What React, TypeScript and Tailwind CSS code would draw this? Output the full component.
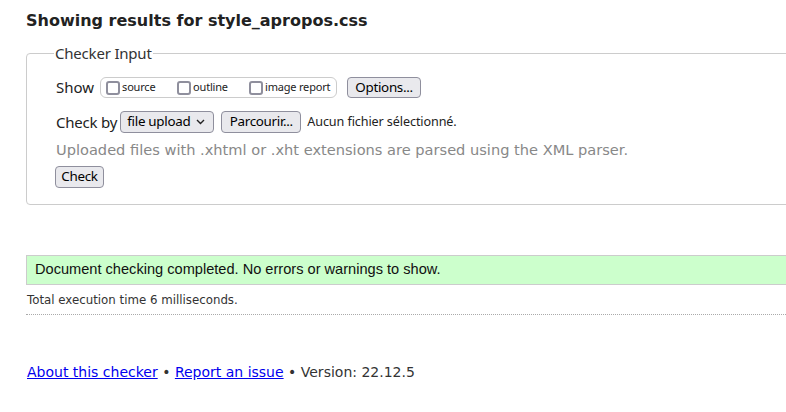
import React from "react";

const ui = "font-['Noto_Sans','Open_Sans',sans-serif]";
const dv = "font-['DejaVu_Sans',sans-serif]";
const btn =
  "h-[21px] px-[5px] rounded-[4px] border border-[#8f8f9d] bg-[#e9e9ed] text-[13.4px] leading-none text-black tracking-[-0.3px] whitespace-nowrap";

const Box = () => (
  <span className="inline-block w-[14px] h-[14px] rounded-[3px] border-[2px] border-[#8f8f9d] bg-white mr-[2px]" />
);

const App = () => {
  return (
    <div className={`w-full h-[412px] overflow-hidden bg-white ${dv} text-[#222]`}>
      <div className="w-[820px] pl-[26px]">
        <h2 className="pt-[11px] text-[16px] font-bold leading-[20px] text-[#222]">
          Showing results for style_apropos.css
        </h2>

        <fieldset className={`mt-[13px] h-[161px] border border-[#ccc] rounded-[4px] pl-[29px] ${ui}`}>
          <legend className="ml-[-2px] px-[1px] text-[15px] text-[#333] leading-[18px] tracking-[-0.2px]">
            Checker Input
          </legend>

          <div className="flex items-center mt-[15px] h-[21px]">
            <span className="text-[15px] text-[#222] mr-[6px]">Show</span>
            <div className="flex items-center h-[21px] w-[237px] border border-[#ccc] rounded-[6px] pl-[5px] text-[11px] text-[#222] tracking-[-0.2px]">
              <label className="flex items-center w-[71px]">
                <Box />
                source
              </label>
              <label className="flex items-center w-[72px]">
                <Box />
                outline
              </label>
              <label className="flex items-center">
                <Box />
                image report
              </label>
            </div>
            <button className={`${btn} ml-[10px] w-[74px]`}>Options...</button>
          </div>

          <div className="flex items-center mt-[13px] h-[22px]">
            <span className="text-[15px] text-[#222] mr-[3px] tracking-[-0.2px]">Check by</span>
            <div className={`${btn} h-[22px] w-[94px] flex items-center justify-between pl-[6px] pr-[8px]`}>
              <span>file upload</span>
              <svg width="9" height="6" viewBox="0 0 9 6">
                <path d="M1 1l3.5 3.5L8 1" stroke="#222" strokeWidth="1.4" fill="none" />
              </svg>
            </div>
            <button className={`${btn} h-[22px] ml-[7px] w-[80px]`}>Parcourir...</button>
            <span className="ml-[6px] text-[12.6px] text-[#222] tracking-[-0.1px]">Aucun fichier sélectionné.</span>
          </div>

          <p className={`${dv} mt-[6px] text-[14.6px] leading-[22px] text-[#888]`}>
            Uploaded files with .xhtml or .xht extensions are parsed using the XML parser.
          </p>

          <button className={`${btn} h-[22px] mt-[5px] ml-[-1px] w-[49px]`}>Check</button>
        </fieldset>

        <div className="mt-[50px] h-[30px] border border-[#ccc] bg-[#ccffcc] flex items-center pl-[8px] font-['Liberation_Sans',Arial,sans-serif] text-[14.6px] text-[#111]">
          Document checking completed. No errors or warnings to show.
        </div>

        <p className="mt-[8px] text-[11.8px] leading-[14px] text-[#333] pl-[1px]">
          Total execution time 6 milliseconds.
        </p>
        <div className="mt-[7px] border-t border-dotted border-[#aaa]" />

        <p className="mt-[48px] text-[14px] leading-[18px] text-[#333] pl-[1px]">
          <a href="#" className="text-[#00e] underline">About this checker</a>
          {" • "}
          <a href="#" className="text-[#00e] underline">Report an issue</a>
          {" • Version: 22.12.5"}
        </p>
      </div>
    </div>
  );
};

export default App;
